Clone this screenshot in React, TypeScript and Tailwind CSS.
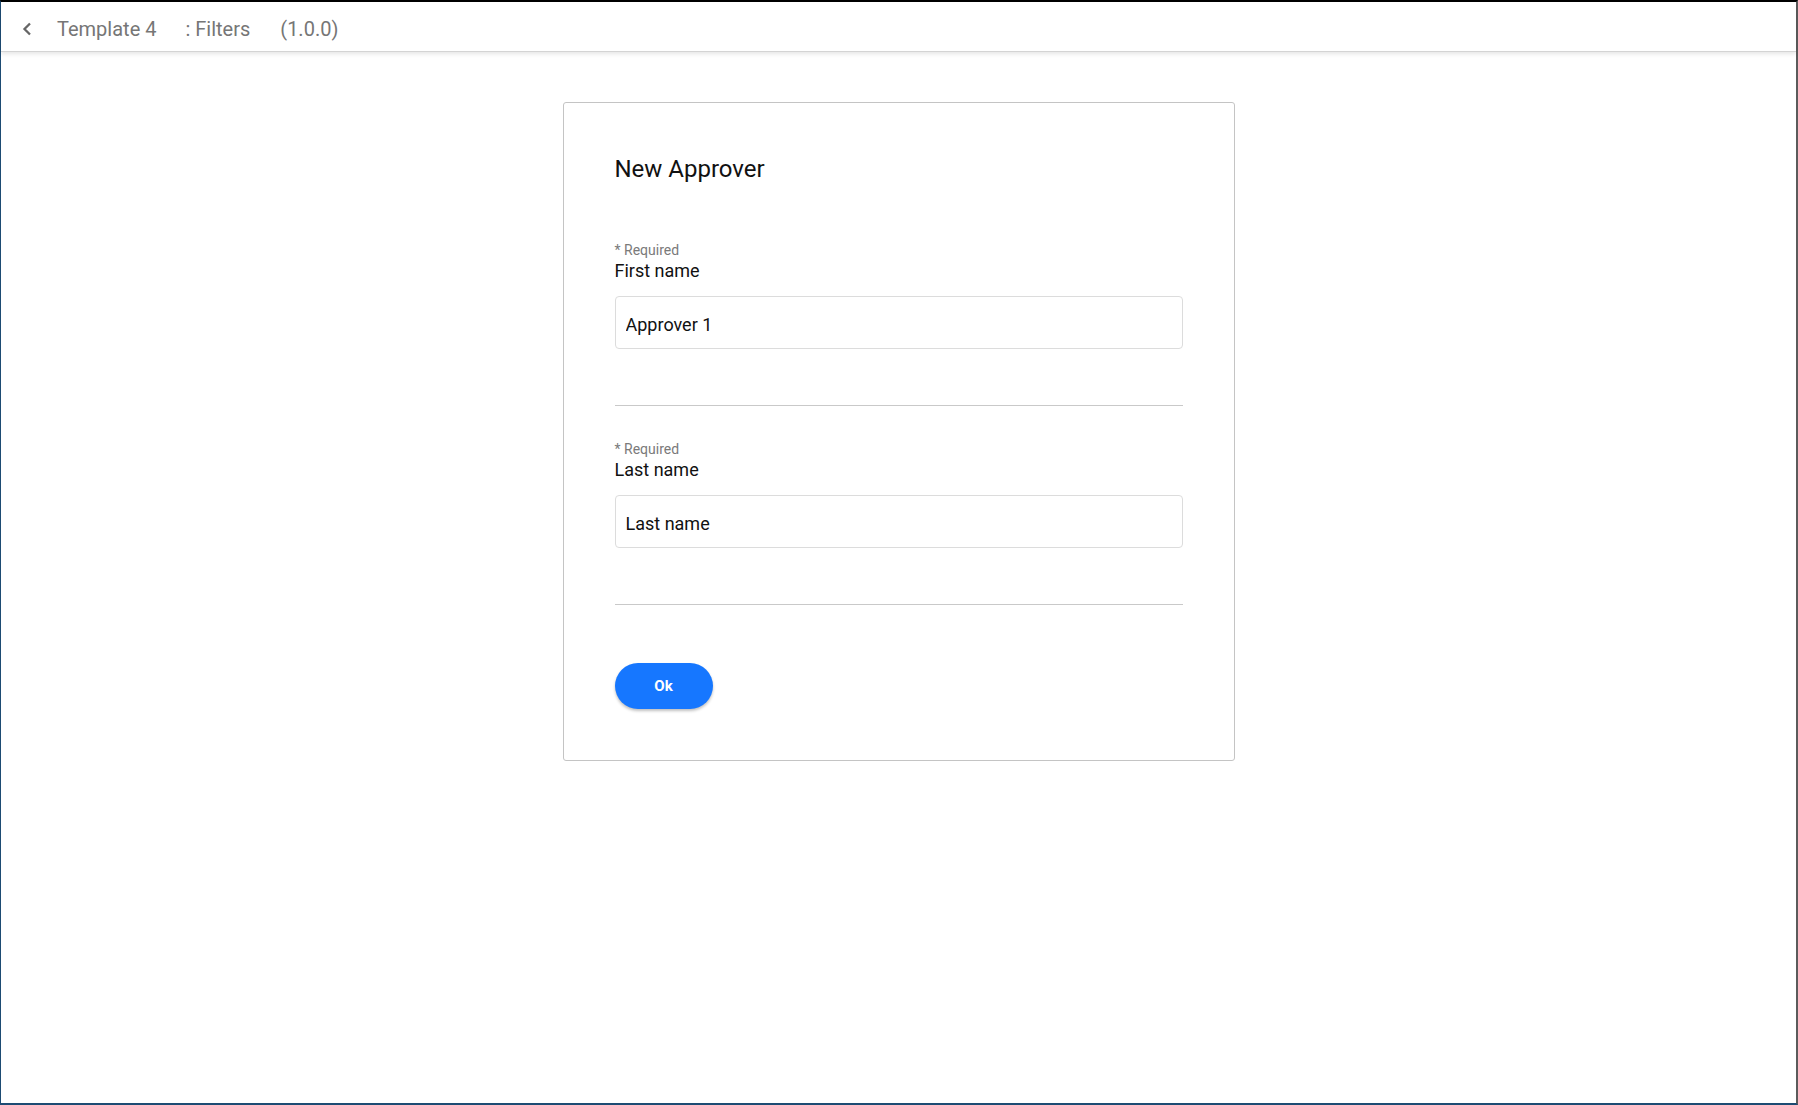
import React from "react";

function Field({ label, value }: { label: string; value: string }) {
  return (
    <div className="flex flex-col">
      <span className="text-[14px] leading-[16px] text-[#7a7a7a]">* Required</span>
      <span className="mt-[2px] text-[18px] leading-[21px] text-[#111]">{label}</span>
      <input
        readOnly
        value={value}
        className="mt-[15px] h-[53px] w-full rounded-[4px] border border-[#dcdcdc] bg-white px-[10px] pt-[3px] text-[18px] text-[#111] outline-none"
        style={{ fontFamily: "Roboto, sans-serif" }}
      />
      <div className="mt-[56px] h-px w-full bg-[#c9c9c9]" />
    </div>
  );
}

export default function App() {
  return (
    <div
      className="flex h-[1105px] w-[1798px] flex-col border-t-2 border-r-2 border-b-2 border-l border-t-black border-r-[#5b5b5b] border-b-[#1d4b73] border-l-[#1d4b73] bg-white"
      style={{ fontFamily: "Roboto, 'Noto Sans', sans-serif" }}
    >
      <header className="relative z-10 flex h-[50px] shrink-0 items-center border-b border-[#d4d4d4] bg-white pt-[4px] shadow-[0_2px_4px_rgba(0,0,0,0.10)]">
        <svg width="12" height="14" viewBox="0 0 12 14" className="ml-[20px]">
          <polyline points="9,1.5 3.5,7 9,12.5" fill="none" stroke="#666" strokeWidth="2.3" />
        </svg>
        <span className="ml-[24px] text-[20px] text-[#767676]">Template 4</span>
        <span className="ml-[29px] text-[20px] text-[#767676]">: Filters</span>
        <span className="ml-[30px] text-[20px] text-[#767676]">(1.0.0)</span>
      </header>

      <main className="flex flex-1 justify-center pt-[50px]">
        <div className="flex h-[659px] w-[672px] flex-col rounded-[3px] border border-[#c4c4c4] px-[51px] pt-[52px]">
          <h1 className="text-[24px] leading-[28px] text-[#111]">New Approver</h1>

          <div className="mt-[59px]">
            <Field label="First name" value="Approver 1" />
          </div>
          <div className="mt-[35px]">
            <Field label="Last name" value="Last name" />
          </div>

          <button className="mt-[58px] h-[46px] w-[98px] rounded-full bg-[#1677ff] text-[15px] font-bold text-white shadow-[0_2px_3px_rgba(0,0,0,0.25)]">
            Ok
          </button>
        </div>
      </main>
    </div>
  );
}
